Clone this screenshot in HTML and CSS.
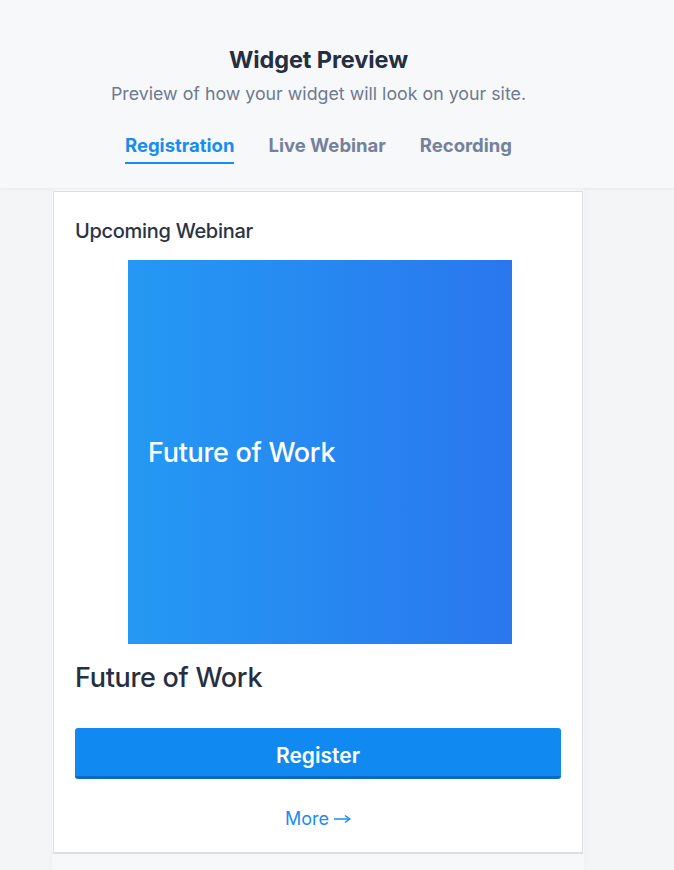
FILE: index.html
```html
<!DOCTYPE html>
<html lang="en">
<head>
<meta charset="utf-8">
<title>Widget Preview</title>
<link rel="stylesheet" href="styles.css">
</head>
<body>
<header class="header">
  <h1 class="title">Widget Preview</h1>
  <p class="subtitle">Preview of how your widget will look on your site.</p>
  <nav class="tabs">
    <span class="tab tab-active">Registration</span>
    <span class="tab">Live Webinar</span>
    <span class="tab">Recording</span>
  </nav>
</header>
<main class="stage">
  <div class="column">
    <section class="card">
      <h2 class="card-label">Upcoming Webinar</h2>
      <div class="cover"><span class="cover-text">Future of Work</span></div>
      <h3 class="event-title">Future of Work</h3>
      <button class="register">Register</button>
      <a class="more" href="#">More<svg class="arrow" width="17" height="10" viewBox="0 0 17 10" aria-hidden="true"><path d="M0 5h15.5" stroke="#1a8cf0" stroke-width="1.5" fill="none"/><path d="M11 1.5L15.8 5L11 8.5" stroke="#1a8cf0" stroke-width="1.5" fill="none"/></svg></a>
    </section>
  </div>
</main>
</body>
</html>
```
FILE: styles.css
```css
* { box-sizing: border-box; }
html, body { margin: 0; padding: 0; }
body {
  background: #f4f5f7;
  font-family: Inter, "Noto Sans", "Liberation Sans", sans-serif;
  width: 674px;
  height: 870px;
  overflow: hidden;
}
.header {
  background: #f7f8fa;
  height: 188px;
  padding-top: 45px;
  display: flex;
  flex-direction: column;
  align-items: center;
  box-shadow: 0 1px 3px rgba(0, 0, 0, 0.06);
  position: relative;
  z-index: 1;
}
.title {
  margin: 0 0 0 -37px;
  font-size: 23.5px;
  line-height: 30px;
  font-weight: 700;
  color: #252f42;
  letter-spacing: -0.1px;
}
.subtitle {
  margin: 7px 0 0 -37px;
  font-size: 17.8px;
  line-height: 24px;
  color: #6d7a8f;
}
.tabs {
  display: flex;
  gap: 34px;
  margin: 27px 0 0 -37px;
}
.tab {
  font-size: 18.5px;
  line-height: 24px;
  font-weight: 700;
  color: #74819a;
  padding-bottom: 5px;
  border-bottom: 2px solid transparent;
}
.tab-active {
  color: #1a8cf0;
  border-bottom-color: #1a8cf0;
}
.stage {
  padding-left: 52px;
}
.column {
  width: 532px;
  height: 682px;
  background: #f7f8fa;
  padding-top: 3px;
  box-shadow: 0 0 8px rgba(0, 0, 0, 0.03);
}
.card {
  margin: 0 0 0 1px;
  width: 530px;
  background: #ffffff;
  border: 1px solid #dcdee2;
  border-bottom-width: 2px;
  padding: 27px 21px 21px;
  display: flex;
  flex-direction: column;
}
.card-label {
  margin: 0;
  font-size: 20px;
  line-height: 24px;
  font-weight: 500;
  color: #2a3346;
  letter-spacing: -0.3px;
}
.cover {
  width: 384px;
  height: 384px;
  margin: 17px 0 0 53px;
  background: linear-gradient(90deg, #2499f4 0%, #2a77ee 100%);
  display: flex;
  align-items: center;
  padding-left: 20px;
}
.cover-text {
  color: #ffffff;
  font-size: 27px;
  font-weight: 500;
  letter-spacing: -0.3px;
}
.event-title {
  margin: 17px 0 0;
  font-size: 27px;
  line-height: 34px;
  font-weight: 500;
  color: #262f42;
  letter-spacing: -0.3px;
}
.register {
  margin-top: 33px;
  height: 51px;
  width: 100%;
  border: 0;
  border-bottom: 3px solid #0b6ac2;
  border-radius: 3px;
  background: #108af0;
  color: #ffffff;
  font-family: inherit;
  font-size: 21px;
  font-weight: 600;
  padding: 6px 0 0;
}
.more {
  margin-top: 28px;
  align-self: center;
  display: flex;
  align-items: center;
  gap: 5px;
  font-size: 18px;
  line-height: 24px;
  color: #1a8cf0;
  text-decoration: none;
}
.arrow {
  display: block;
  margin-top: -1px;
}
```
